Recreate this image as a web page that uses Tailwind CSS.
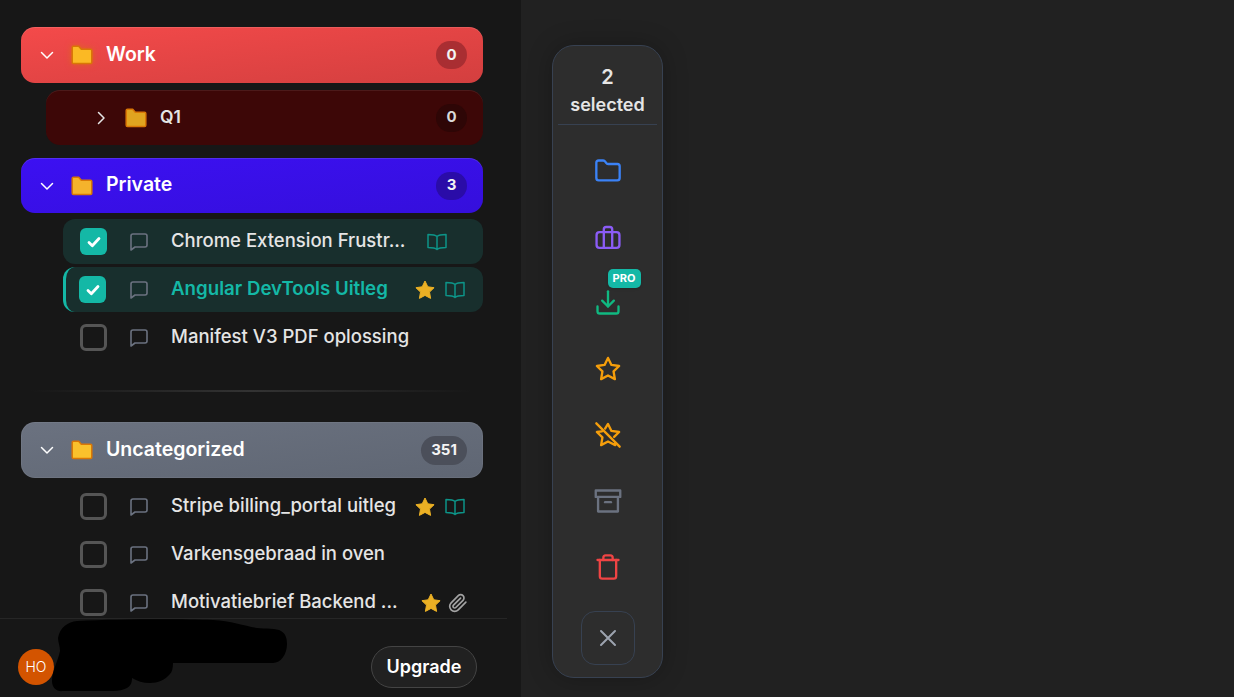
<!DOCTYPE html>
<html lang="en">
<head>
    <meta charset="UTF-8">
    <title>Folders</title>
    <script src="https://cdn.jsdelivr.net/npm/@tailwindcss/browser@4"></script>
</head>
<body class="h-[697px] w-[1234px] overflow-hidden flex bg-[#212121] font-['Inter',sans-serif] text-[#e5e5e5]">

    <svg width="0" height="0" class="absolute">
        <defs>
            <symbol id="folder-fill" viewBox="0 0 22 20"><path d="M2.500 1.200h5.200l2.600 3h9.200c.7 0 1.300.6 1.300 1.300v11.800c0 .7-.6 1.300-1.300 1.300H2.500c-.7 0-1.300-.6-1.300-1.300V2.500c0-.7.6-1.300 1.300-1.300z" fill="currentColor" stroke="#d97706" stroke-width="1.500" stroke-linejoin="round"/></symbol>
            <symbol id="chat" viewBox="0 0 18 18"><path d="M1 17V3a2 2 0 0 1 2-2h12a2 2 0 0 1 2 2v9a2 2 0 0 1-2 2H5z" fill="none" stroke="currentColor" stroke-width="1.600" stroke-linejoin="round"/></symbol>
            <symbol id="book" viewBox="0 0 20 18"><path d="M10 3.500C8.500 2 6.500 1.500 1 1.500v13c5.500 0 7.500.5 9 2 1.500-1.500 3.500-2 9-2v-13c-5.500 0-7.500.5-9 2zm0 0v13" fill="none" stroke="currentColor" stroke-width="1.500" stroke-linejoin="round"/></symbol>
            <symbol id="star-fill" viewBox="0 0 20 20"><path d="M10 1l2.800 5.800 6.300.9-4.600 4.400 1.100 6.300L10 15.400l-5.600 3 1.100-6.300L.9 7.700l6.300-.9z" fill="#ebb024" stroke="#ebb024" stroke-linejoin="round"/></symbol>
            <symbol id="check" viewBox="0 0 14 14"><path d="M2 7.500l3.300 3.200L12 3.500" fill="none" stroke="#fff" stroke-width="2.800" stroke-linecap="round" stroke-linejoin="round"/></symbol>
        </defs>
    </svg>

    <!-- sidebar -->
    <aside class="relative w-[521px] h-full shrink-0 bg-[#171717] flex flex-col">
        <div class="h-[618px] shrink-0 overflow-hidden pt-[27px] pl-[21px] pr-[38px]">

            <div class="h-14 rounded-[14px] bg-linear-to-br from-[#f44a4a] to-[#d33f3f] shadow-[inset_0_1px_0_rgba(255,255,255,0.12)] flex items-center pl-[18px] pr-4">
                <svg class="w-4 h-4 text-white" viewBox="0 0 16 16" fill="none" stroke="currentColor" stroke-width="1.500" stroke-linecap="round" stroke-linejoin="round"><path d="M2.500 5.500L8 11l5.500-5.500"/></svg>
                <svg class="w-[22px] h-5 ml-4 text-[#fbb924] drop-shadow-[0_0_3px_rgba(217,119,6,0.6)]"><use href="#folder-fill"/></svg>
                <span class="ml-[13px] pb-[1px] text-[19.5px] font-semibold text-white">Work</span>
                <span class="ml-auto h-7 w-[31px] rounded-full bg-[#a92e32] flex items-center justify-center text-[15px] font-bold text-[#f3f3f3]">0</span>
            </div>

            <div class="mt-[7px] ml-[25px] h-[55px] rounded-[14px] bg-[#3d0707] shadow-[inset_0_1px_0_rgba(255,255,255,0.08)] flex items-center pl-[47px] pr-4">
                <svg class="w-4 h-4 text-[#e5e5e5]" viewBox="0 0 16 16" fill="none" stroke="currentColor" stroke-width="1.500" stroke-linecap="round" stroke-linejoin="round"><path d="M5.500 2.500L11 8l-5.500 5.500"/></svg>
                <svg class="w-[22px] h-5 ml-[16px] text-[#e0a420]"><use href="#folder-fill"/></svg>
                <span class="ml-[13px] text-[17.5px] font-semibold text-[#e5e5e5]">Q1</span>
                <span class="ml-auto h-7 w-[31px] rounded-full bg-[#2e0606] flex items-center justify-center text-[15px] font-bold text-[#d9d9d9]">0</span>
            </div>

            <div class="mt-[13px] h-[55px] rounded-[14px] bg-linear-to-br from-[#3c10f2] to-[#350fdc] shadow-[inset_0_1px_0_rgba(255,255,255,0.12)] flex items-center pl-[18px] pr-4">
                <svg class="w-4 h-4 text-white" viewBox="0 0 16 16" fill="none" stroke="currentColor" stroke-width="1.500" stroke-linecap="round" stroke-linejoin="round"><path d="M2.500 5.500L8 11l5.500-5.500"/></svg>
                <svg class="w-[22px] h-5 ml-4 text-[#f5b32c]"><use href="#folder-fill"/></svg>
                <span class="ml-[13px] pb-[2px] text-[19.5px] font-semibold text-white">Private</span>
                <span class="ml-auto h-7 w-[31px] rounded-full bg-[#2a0ca8] flex items-center justify-center text-[15px] font-bold text-[#f3f3f3]">3</span>
            </div>

            <div class="mt-[6px] ml-[42px] h-[45px] rounded-[12px] bg-[#182f2d] flex items-center pl-[17px]">
                <span class="w-[27px] h-[27px] rounded-[6px] bg-[#14b8a6] flex items-center justify-center"><svg class="w-[14px] h-[14px]"><use href="#check"/></svg></span>
                <svg class="w-[18px] h-[18px] ml-[23px] text-[#6b7280]"><use href="#chat"/></svg>
                <span class="ml-[23px] pb-[2px] text-[18.5px] font-medium text-[#e5e5e5] whitespace-nowrap">Chrome Extension Frustr...</span>
                <svg class="w-5 h-[18px] ml-[22px] text-[#0d9488]"><use href="#book"/></svg>
            </div>

            <div class="mt-[3px] ml-[42px] h-[45px] rounded-[12px] bg-[#182f2d] border-l-[3px] border-[#14b8a6] flex items-center pl-[13px]">
                <span class="w-[27px] h-[27px] rounded-[6px] bg-[#14b8a6] flex items-center justify-center"><svg class="w-[14px] h-[14px]"><use href="#check"/></svg></span>
                <svg class="w-[18px] h-[18px] ml-6 text-[#6b7280]"><use href="#chat"/></svg>
                <span class="ml-[23px] pb-[1px] text-[18.7px] font-semibold text-[#14b8a6] whitespace-nowrap">Angular DevTools Uitleg</span>
                <svg class="w-5 h-5 ml-auto text-[#ebb024]"><use href="#star-fill"/></svg>
                <svg class="w-5 h-[18px] ml-[10px] mr-[18px] text-[#0d9488]"><use href="#book"/></svg>
            </div>

            <div class="mt-[3px] ml-[42px] h-[45px] flex items-center pl-[17px]">
                <span class="w-[27px] h-[27px] rounded-[6px] border-[3px] border-[#555]"></span>
                <svg class="w-[18px] h-[18px] ml-[23px] text-[#6b7280]"><use href="#chat"/></svg>
                <span class="ml-[23px] pb-[2px] text-[18.5px] font-medium text-[#e5e5e5] whitespace-nowrap">Manifest V3 PDF oplossing</span>
            </div>

            <div class="mt-[30px] mx-[10px] h-0.5 bg-linear-to-r from-transparent via-[#333] to-transparent"></div>

            <div class="mt-[30px] h-14 rounded-[14px] bg-linear-to-br from-[#6b7280] to-[#5f6673] shadow-[inset_0_0_0_1px_rgba(255,255,255,0.06)] flex items-center pl-[18px] pr-4">
                <svg class="w-4 h-4 text-white" viewBox="0 0 16 16" fill="none" stroke="currentColor" stroke-width="1.500" stroke-linecap="round" stroke-linejoin="round"><path d="M2.500 5.500L8 11l5.500-5.500"/></svg>
                <svg class="w-[22px] h-5 ml-4 text-[#fac12c]"><use href="#folder-fill"/></svg>
                <span class="ml-[13px] pb-[1px] text-[19.5px] font-semibold text-white">Uncategorized</span>
                <span class="ml-auto h-[29px] w-[46px] rounded-full bg-[#4b4f5a] flex items-center justify-center text-[15px] font-bold text-[#f3f3f3]">351</span>
            </div>

            <div class="mt-[6px] ml-[42px] h-[45px] flex items-center pl-[17px]">
                <span class="w-[27px] h-[27px] rounded-[6px] border-[3px] border-[#555]"></span>
                <svg class="w-[18px] h-[18px] ml-[23px] text-[#6b7280]"><use href="#chat"/></svg>
                <span class="ml-[23px] pb-[2px] text-[18.5px] font-medium text-[#e5e5e5] whitespace-nowrap">Stripe billing_portal uitleg</span>
                <svg class="w-5 h-5 ml-auto text-[#ebb024]"><use href="#star-fill"/></svg>
                <svg class="w-5 h-[18px] ml-[10px] mr-[18px] text-[#0d9488]"><use href="#book"/></svg>
            </div>

            <div class="mt-[3px] ml-[42px] h-[45px] flex items-center pl-[17px]">
                <span class="w-[27px] h-[27px] rounded-[6px] border-[3px] border-[#555]"></span>
                <svg class="w-[18px] h-[18px] ml-[23px] text-[#6b7280]"><use href="#chat"/></svg>
                <span class="ml-[23px] pb-[2px] text-[18.5px] font-medium text-[#e5e5e5] whitespace-nowrap">Varkensgebraad in oven</span>
            </div>

            <div class="mt-[3px] ml-[42px] h-[45px] flex items-center pl-[17px]">
                <span class="w-[27px] h-[27px] rounded-[6px] border-[3px] border-[#555]"></span>
                <svg class="w-[18px] h-[18px] ml-[23px] text-[#6b7280]"><use href="#chat"/></svg>
                <span class="ml-[23px] pb-[2px] text-[18.5px] font-medium text-[#e5e5e5] whitespace-nowrap">Motivatiebrief Backend ...</span>
                <svg class="w-5 h-5 ml-auto text-[#ebb024]"><use href="#star-fill"/></svg>
                <svg class="w-5 h-5 ml-[7px] mr-[15px] text-[#a3a3a3]" viewBox="0 0 24 24" fill="none" stroke="currentColor" stroke-width="2" stroke-linecap="round" stroke-linejoin="round"><path d="M21.440 11.050l-9.190 9.190a6 6 0 0 1-8.490-8.490l8.570-8.570A4 4 0 1 1 18 8.840l-8.590 8.570a2 2 0 0 1-2.830-2.830l8.490-8.480"/></svg>
            </div>
        </div>

        <!-- footer -->
        <div class="relative w-[507px] h-[79px] border-t border-[#262626] flex items-end pl-[18px] pr-[30px] pb-[9px]">
            <span class="w-9 h-9 mb-[3px] rounded-full bg-[#d35400] flex items-center justify-center text-sm font-light text-white">HO</span>
            <button class="ml-auto w-[106px] h-[42px] rounded-full border border-[#444] bg-[#212121] text-lg font-semibold text-white">Upgrade</button>
            <!-- blacked-out account name -->
            <svg class="absolute left-[50px] top-0 w-[240px] h-[79px]" viewBox="0 0 240 79"><path d="M8 19C10 8 18 3 27 2 70 0 130 0 163 1c18 1 32 6 44 8 8 1 20 0 24 3 5 3 6 8 6 13 0 10-6 19-14 19H123c0 5-1 9-3 11-5 6-12 9-20 9-7 0-13-2-18-5 0 6-2 8-5 10-4 2-8 3-14 3H13C7 73 2 69 2 62c0-10 6-20 8-30 0-5-2-9-2-13z" fill="#000"/></svg>
        </div>
    </aside>

    <!-- bulk actions -->
    <main class="flex-1 pt-[45px] pl-[31px]">
        <div class="w-[111px] h-[633px] rounded-[22px] bg-[#2d2d2d] border border-[#374151] shadow-[0_0_24px_rgba(0,0,0,0.25)] flex flex-col items-center">
            <div class="w-[99px] h-[79px] shrink-0 border-b border-[#374151] flex flex-col items-center pt-[17px] text-lg leading-[28px] font-semibold text-[#e5e5e5]">
                <span class="text-xl leading-[28px]">2</span>
                <span>selected</span>
            </div>

            <svg class="mt-[32px] w-7 h-7 shrink-0 text-[#3b82f6]" viewBox="0 0 24 24" fill="none" stroke="currentColor" stroke-width="2" stroke-linecap="round" stroke-linejoin="round"><path d="M20 20a2 2 0 0 0 2-2V8a2 2 0 0 0-2-2h-7.900a2 2 0 0 1-1.690-.9L9.600 3.900A2 2 0 0 0 7.930 3H4a2 2 0 0 0-2 2v13a2 2 0 0 0 2 2Z"/></svg>

            <svg class="mt-[38px] w-7 h-7 shrink-0 text-[#8b5cf6]" viewBox="0 0 24 24" fill="none" stroke="currentColor" stroke-width="2" stroke-linecap="round" stroke-linejoin="round"><rect x="2.200" y="7.800" width="19.600" height="13.500" rx="2.500"/><path d="M8.400 21.300V5.400a2 2 0 0 1 2-2h3.200a2 2 0 0 1 2 2v15.900"/></svg>

            <div class="relative mt-[38px] w-7 h-7 shrink-0">
                <svg class="w-7 h-7 text-[#10b981]" viewBox="0 0 24 24" fill="none" stroke="currentColor" stroke-width="2" stroke-linecap="round" stroke-linejoin="round"><path d="M21 15v4a2 2 0 0 1-2 2H5a2 2 0 0 1-2-2v-4"/><path d="M7 10l5 5 5-5"/><path d="M12 15V2"/></svg>
                <span class="absolute left-[14px] top-[-20px] h-[19px] w-[33px] rounded-[5px] bg-[#14b8a6] flex items-center justify-center text-[11px] font-bold text-white shadow">PRO</span>
            </div>

            <svg class="mt-[38px] w-7 h-7 shrink-0 text-[#f59e0b]" viewBox="0 0 24 24" fill="none" stroke="currentColor" stroke-width="2" stroke-linecap="round" stroke-linejoin="round"><path d="M12 2.500l2.950 5.980 6.600.96-4.780 4.650 1.130 6.570L12 17.560l-5.900 3.100 1.130-6.570L2.450 9.440l6.600-.96z"/></svg>

            <svg class="mt-[38px] w-7 h-7 shrink-0 text-[#f59e0b]" viewBox="0 0 24 24" fill="none" stroke="currentColor" stroke-width="2" stroke-linecap="round" stroke-linejoin="round"><path d="M9.500 6.500L12 2.500l2.950 5.980 6.600.96-4.300 4.200"/><path d="M18 19l.2 1.660L12 17.560l-5.900 3.100 1.130-6.570L2.450 9.440l4.300-.6"/><path d="M2 2l20 20"/></svg>

            <svg class="mt-[38px] w-7 h-7 shrink-0 text-[#6b7280]" viewBox="0 0 24 24" fill="none" stroke="currentColor" stroke-width="2" stroke-linejoin="round"><rect x="1.500" y="3" width="21" height="5.500"/><path d="M3.500 8.500V21h17V8.500"/><path d="M9.500 13h5" stroke-linecap="round"/></svg>

            <svg class="mt-[38px] w-7 h-7 shrink-0 text-[#ef4444]" viewBox="0 0 24 24" fill="none" stroke="currentColor" stroke-width="2" stroke-linecap="round" stroke-linejoin="round"><path d="M3 6h18"/><path d="M19 6v14a2 2 0 0 1-2 2H7a2 2 0 0 1-2-2V6"/><path d="M8 6V4a2 2 0 0 1 2-2h4a2 2 0 0 1 2 2v2"/></svg>

            <button class="mt-[30px] w-[54px] h-[54px] shrink-0 rounded-[14px] border border-[#374151] flex items-center justify-center text-[#9ca3af]">
                <svg class="w-6 h-6" viewBox="0 0 24 24" fill="none" stroke="currentColor" stroke-width="2" stroke-linecap="round"><path d="M5 5l14 14M19 5L5 19"/></svg>
            </button>
        </div>
    </main>
</body>
</html>
